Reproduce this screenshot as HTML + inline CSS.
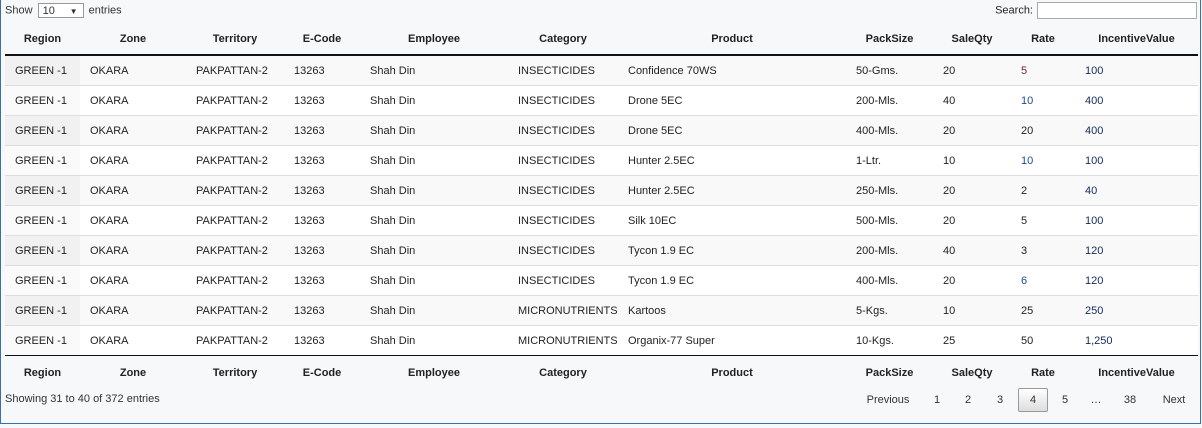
<!DOCTYPE html>
<html><head><style>
body{margin:0;width:1202px;height:428px;background:#f7f8f9;font-family:"Liberation Sans",sans-serif;font-size:11px;color:#222;overflow:hidden}
.frame{position:absolute;left:0;top:0;width:1199px;height:423px;border:1px solid #3c6ea8;border-top:none}
.top{position:absolute;top:3px;left:5px;font-size:11px;color:#333}
.sel{display:inline-block;width:46px;height:15px;border:1px solid #999;background:#fff;vertical-align:middle;margin:0 2px;position:relative;font-size:11px;line-height:15px;padding-left:4px;box-sizing:border-box}
.sel span{position:absolute;right:5px;top:0;font-size:8px}
.search{position:absolute;top:2px;right:5px;font-size:11px}
.search i{display:inline-block;width:160px;height:17px;border:1px solid #aaa;background:#fff;vertical-align:middle;margin-left:4px;box-sizing:border-box}
table{position:absolute;left:5px;top:24px;border-collapse:collapse;table-layout:fixed;width:1193px}
th{font-weight:bold;font-size:11px;height:30px;text-align:center;padding:0}
thead th{border-bottom:2px solid #111;height:30px}
tfoot th{border-top:1px solid #111;height:34px;vertical-align:middle}
td{height:29px;padding:0 0 0 10px;border-top:1px solid #ddd;white-space:nowrap;overflow:hidden}
tbody tr:first-child td{border-top:none;height:29px}
tbody tr:nth-child(odd) td{background:#f9f9f9}
tbody tr:nth-child(odd) td:first-child{background:#f1f1f1}
tbody tr:nth-child(even) td{background:#fff}
tbody tr:nth-child(even) td:first-child{background:#fafafa}
.b{color:#1a4b9b}.m{color:#7a1e2e}.n{color:#142a5c}
.info{position:absolute;left:5px;top:393px;font-size:11px;color:#333}
.pg span{position:absolute;top:388px;height:24px;line-height:24px;font-size:11px;color:#333;transform:translateX(-50%)}
.pg .cur{border:1px solid #999;border-radius:2px;background:linear-gradient(#fff,#ddd);height:22px;line-height:22px;width:28px;text-align:center}
</style></head><body>
<div class="frame"></div>
<div class="top">Show <span class="sel">10<span>▼</span></span> entries</div>
<div class="search">Search:<i></i></div>
<table>
<colgroup><col style="width:75px"><col style="width:106px"><col style="width:98px"><col style="width:76px"><col style="width:148px"><col style="width:110px"><col style="width:228px"><col style="width:87px"><col style="width:78px"><col style="width:64px"><col style="width:123px"></colgroup>
<thead><tr><th>Region</th><th>Zone</th><th>Territory</th><th>E-Code</th><th>Employee</th><th>Category</th><th>Product</th><th>PackSize</th><th>SaleQty</th><th>Rate</th><th>IncentiveValue</th></tr></thead>
<tbody>
<tr><td>GREEN -1</td><td>OKARA</td><td>PAKPATTAN-2</td><td>13263</td><td>Shah Din</td><td>INSECTICIDES</td><td>Confidence 70WS</td><td>50-Gms.</td><td>20</td><td class="m">5</td><td class="n">100</td></tr>
<tr><td>GREEN -1</td><td>OKARA</td><td>PAKPATTAN-2</td><td>13263</td><td>Shah Din</td><td>INSECTICIDES</td><td>Drone 5EC</td><td>200-Mls.</td><td>40</td><td class="b">10</td><td class="n">400</td></tr>
<tr><td>GREEN -1</td><td>OKARA</td><td>PAKPATTAN-2</td><td>13263</td><td>Shah Din</td><td>INSECTICIDES</td><td>Drone 5EC</td><td>400-Mls.</td><td>20</td><td>20</td><td class="n">400</td></tr>
<tr><td>GREEN -1</td><td>OKARA</td><td>PAKPATTAN-2</td><td>13263</td><td>Shah Din</td><td>INSECTICIDES</td><td>Hunter 2.5EC</td><td>1-Ltr.</td><td>10</td><td class="b">10</td><td class="n">100</td></tr>
<tr><td>GREEN -1</td><td>OKARA</td><td>PAKPATTAN-2</td><td>13263</td><td>Shah Din</td><td>INSECTICIDES</td><td>Hunter 2.5EC</td><td>250-Mls.</td><td>20</td><td>2</td><td class="n">40</td></tr>
<tr><td>GREEN -1</td><td>OKARA</td><td>PAKPATTAN-2</td><td>13263</td><td>Shah Din</td><td>INSECTICIDES</td><td>Silk 10EC</td><td>500-Mls.</td><td>20</td><td>5</td><td class="n">100</td></tr>
<tr><td>GREEN -1</td><td>OKARA</td><td>PAKPATTAN-2</td><td>13263</td><td>Shah Din</td><td>INSECTICIDES</td><td>Tycon 1.9 EC</td><td>200-Mls.</td><td>40</td><td>3</td><td class="n">120</td></tr>
<tr><td>GREEN -1</td><td>OKARA</td><td>PAKPATTAN-2</td><td>13263</td><td>Shah Din</td><td>INSECTICIDES</td><td>Tycon 1.9 EC</td><td>400-Mls.</td><td>20</td><td class="b">6</td><td class="n">120</td></tr>
<tr><td>GREEN -1</td><td>OKARA</td><td>PAKPATTAN-2</td><td>13263</td><td>Shah Din</td><td>MICRONUTRIENTS</td><td>Kartoos</td><td>5-Kgs.</td><td>10</td><td>25</td><td class="n">250</td></tr>
<tr><td>GREEN -1</td><td>OKARA</td><td>PAKPATTAN-2</td><td>13263</td><td>Shah Din</td><td>MICRONUTRIENTS</td><td>Organix-77 Super</td><td>10-Kgs.</td><td>25</td><td>50</td><td class="n">1,250</td></tr>
</tbody>
<tfoot><tr><th>Region</th><th>Zone</th><th>Territory</th><th>E-Code</th><th>Employee</th><th>Category</th><th>Product</th><th>PackSize</th><th>SaleQty</th><th>Rate</th><th>IncentiveValue</th></tr></tfoot>
</table>
<div class="info">Showing 31 to 40 of 372 entries</div>
<div class="pg"><span style="left:888px">Previous</span><span style="left:937px">1</span><span style="left:968px">2</span><span style="left:1000px">3</span><span class="cur" style="left:1033px">4</span><span style="left:1065px">5</span><span style="left:1096px">…</span><span style="left:1130px">38</span><span style="left:1174px">Next</span></div>
</body></html>
